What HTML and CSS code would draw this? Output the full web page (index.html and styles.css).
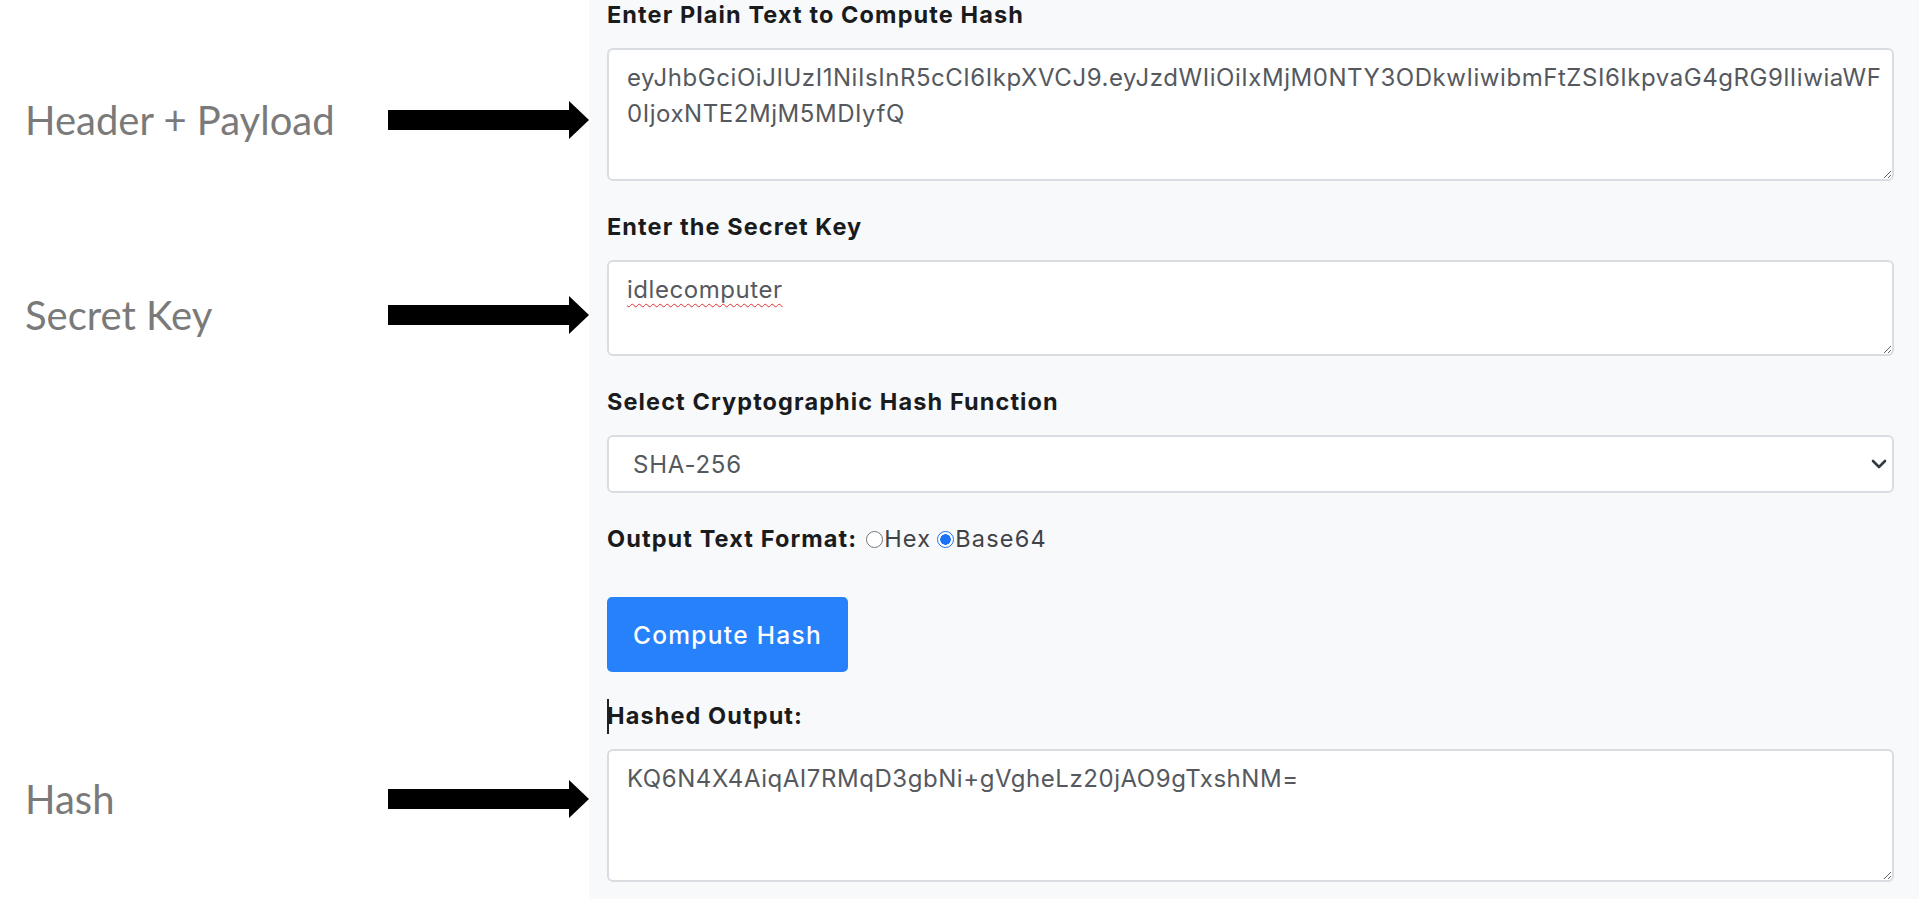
FILE: index.html
```html
<!DOCTYPE html>
<html lang="en">
<head>
<meta charset="utf-8">
<title>HMAC Hash</title>
<link rel="stylesheet" href="styles.css">
</head>
<body>
<div class="page">
  <aside class="notes">
    <div class="note note-1">
      <span class="note-text">Header + Payload</span>
      <svg class="arrow" width="201" height="38" viewBox="0 0 201 38"><rect x="0" y="9" width="181" height="20"/><polygon points="181,0 201,19 181,38"/></svg>
    </div>
    <div class="note note-2">
      <span class="note-text">Secret Key</span>
      <svg class="arrow" width="201" height="38" viewBox="0 0 201 38"><rect x="0" y="9" width="181" height="20"/><polygon points="181,0 201,19 181,38"/></svg>
    </div>
    <div class="note note-3">
      <span class="note-text">Hash</span>
      <svg class="arrow" width="201" height="38" viewBox="0 0 201 38"><rect x="0" y="9" width="181" height="20"/><polygon points="181,0 201,19 181,38"/></svg>
    </div>
  </aside>

  <main class="panel">
    <section class="group">
      <div class="label">Enter Plain Text to Compute Hash</div>
      <div class="field field-tall field-pre">eyJhbGciOiJIUzI1NiIsInR5cCI6IkpXVCJ9.eyJzdWIiOiIxMjM0NTY3ODkwIiwibmFtZSI6IkpvaG4gRG9lIiwiaWF
0IjoxNTE2MjM5MDIyfQ</div>
    </section>

    <section class="group group-gap">
      <div class="label">Enter the Secret Key</div>
      <div class="field field-short"><span class="misspelled">idlecomputer</span></div>
    </section>

    <section class="group group-gap">
      <div class="label">Select Cryptographic Hash Function</div>
      <div class="select">
        <span>SHA-256</span>
        <svg class="chevron" width="16" height="10" viewBox="0 0 16 10"><polyline points="2,2 8,8 14,2" fill="none" stroke="#343a40" stroke-width="2.6" stroke-linecap="round" stroke-linejoin="round"/></svg>
      </div>
    </section>

    <div class="format group-gap">
      <span class="label-inline">Output Text Format:</span>
      <input type="radio" name="fmt" class="radio" id="hex"><label for="hex" class="opt">Hex</label>
      <input type="radio" name="fmt" class="radio" id="b64" checked><label for="b64" class="opt">Base64</label>
    </div>

    <button class="btn" type="button">Compute Hash</button>

    <section class="group group-out">
      <div class="label"><span class="caret"></span>Hashed Output:</div>
      <div class="field field-tall">KQ6N4X4AiqAI7RMqD3gbNi+gVgheLz20jAO9gTxshNM=</div>
    </section>
  </main>
</div>
</body>
</html>
```

FILE: styles.css
```css
html, body {
  margin: 0;
  padding: 0;
  background: #ffffff;
}

.page {
  display: flex;
  min-height: 899px;
}

/* left annotation column */
.notes {
  width: 589px;
  flex: none;
  display: flex;
  flex-direction: column;
  padding-top: 96px;
  box-sizing: border-box;
}

.note {
  display: flex;
  align-items: center;
  height: 48px;
  padding-left: 25px;
}

.note-2 { margin-top: 147px; }
.note-3 { margin-top: 436px; }

.note-text {
  flex: 1;
  font-family: Lato, "Open Sans", sans-serif;
  font-size: 40px;
  line-height: 48px;
  color: #7a7a7a;
  white-space: nowrap;
}

.arrow {
  flex: none;
  fill: #000;
  display: block;
}

/* right form panel */
.panel {
  flex: 1;
  min-width: 0;
  background: #f8f9fa;
  padding: 0 25px 0 18px;
  display: flex;
  flex-direction: column;
  align-items: stretch;
  font-family: Inter, "Open Sans", sans-serif;
}

.group {
  display: flex;
  flex-direction: column;
  min-width: 0;
}

.group-gap { margin-top: 31px; }
.group-out { margin-top: 29px; }

.label,
.label-inline {
  font-family: Inter, "Open Sans", sans-serif;
  font-weight: 700;
  font-size: 23.5px;
  line-height: 30px;
  letter-spacing: 1.1px;
  color: #1a1b1d;
}

.label { margin-bottom: 18px; }

.caret {
  display: inline-block;
  width: 2px;
  height: 35px;
  background: #222;
  vertical-align: top;
  margin: -2px -2px -5px 0;
}

.field {
  box-sizing: border-box;
  min-width: 0;
  background: #ffffff;
  border: 2px solid #d9dde2;
  border-radius: 6px;
  padding: 10px 18px;
  font-size: 24px;
  line-height: 36px;
  letter-spacing: 0.55px;
  color: #55595e;
  resize: vertical;
  overflow: hidden;
}

.field-tall { height: 133px; }
.field-short { height: 96px; }
.field-pre { white-space: pre; }

.misspelled {
  text-decoration: underline wavy #e0312f;
  text-decoration-thickness: 1px;
  text-underline-offset: 5px;
}

.select {
  box-sizing: border-box;
  height: 58px;
  background: #ffffff;
  border: 2px solid #d9dde2;
  border-radius: 6px;
  padding: 0 5px 0 24px;
  display: flex;
  align-items: center;
  justify-content: space-between;
  font-size: 24px;
  letter-spacing: 0.8px;
  color: #55595e;
}

.chevron { display: block; }

.format {
  display: flex;
  align-items: center;
  height: 30px;
}

.radio {
  appearance: none;
  -webkit-appearance: none;
  box-sizing: border-box;
  width: 17px;
  height: 17px;
  margin: 0 1px 0 9px;
  border: 1.5px solid #767676;
  border-radius: 50%;
  background: #ffffff;
}

.radio:checked {
  border: 1.5px solid #1a74f5;
  background: radial-gradient(circle, #1a74f5 0 5px, #ffffff 5.5px);
}

.radio + .opt + .radio { margin-left: 6px; }

.opt {
  font-size: 23.5px;
  line-height: 30px;
  letter-spacing: 1.2px;
  color: #3f4347;
}

.btn {
  margin-top: 43px;
  align-self: flex-start;
  width: 241px;
  height: 75px;
  border: none;
  border-radius: 5px;
  background: #2781fb;
  color: #ffffff;
  font-family: Inter, "Open Sans", sans-serif;
  font-weight: 500;
  font-size: 24.5px;
  letter-spacing: 1.3px;
  text-align: center;
  padding: 0;
}
```
